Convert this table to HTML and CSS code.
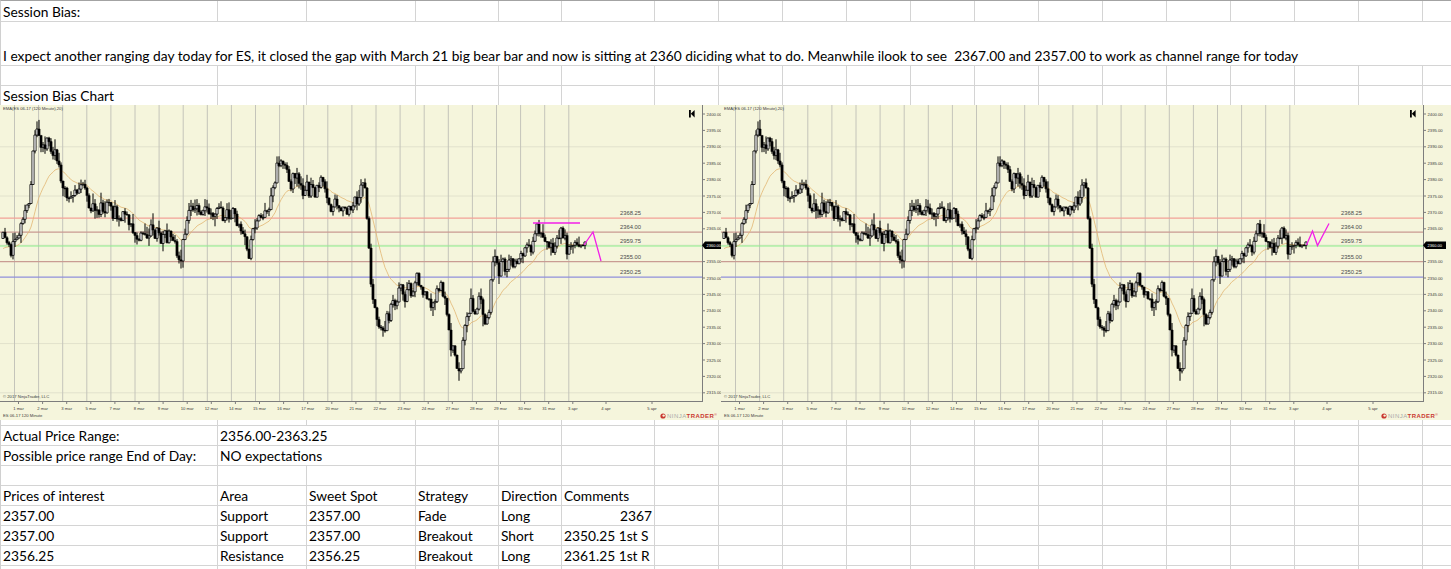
FILE: index.html
```html
<!DOCTYPE html>
<html lang="en">
<head>
<meta charset="utf-8">
<title>Session Bias</title>
<link rel="stylesheet" href="styles.css">
</head>
<body>
<div class="sheet">
  <div class="row h21">
    <div class="cell col-a">Session Bias:</div><div class="cell col-b"></div><div class="cell col-c"></div><div class="cell col-d"></div><div class="cell col-e"></div><div class="cell col-f"></div><div class="rest"></div>
  </div>
  <div class="row h44">
    <div class="cell full">I expect another ranging day today for ES, it closed the gap with March 21 big bear bar and now is sitting at 2360 diciding what to do. Meanwhile ilook to see  2367.00 and 2357.00 to work as channel range for today</div>
  </div>
  <div class="row">
    <div class="cell col-a"></div><div class="cell col-b"></div><div class="cell col-c"></div><div class="cell col-d"></div><div class="cell col-e"></div><div class="cell col-f"></div><div class="rest"></div>
  </div>
  <div class="row">
    <div class="cell col-a">Session Bias Chart</div><div class="cell col-b"></div><div class="cell col-c"></div><div class="cell col-d"></div><div class="cell col-e"></div><div class="cell col-f"></div><div class="rest"></div>
  </div>
  <div class="row h320">
    <div class="cell col-a"></div><div class="cell col-b"></div><div class="cell col-c"></div><div class="cell col-d"></div><div class="cell col-e"></div><div class="cell col-f"></div><div class="rest"></div>
  </div>
  <div class="row">
    <div class="cell col-a">Actual Price Range:</div><div class="cell col-b no-line">2356.00-2363.25</div><div class="cell col-c"></div><div class="cell col-d"></div><div class="cell col-e"></div><div class="cell col-f"></div><div class="rest"></div>
  </div>
  <div class="row">
    <div class="cell col-a">Possible price range End of Day:</div><div class="cell col-b no-line">NO expectations</div><div class="cell col-c"></div><div class="cell col-d"></div><div class="cell col-e"></div><div class="cell col-f"></div><div class="rest"></div>
  </div>
  <div class="row">
    <div class="cell col-a"></div><div class="cell col-b"></div><div class="cell col-c"></div><div class="cell col-d"></div><div class="cell col-e"></div><div class="cell col-f"></div><div class="rest"></div>
  </div>
  <div class="row">
    <div class="cell col-a">Prices of interest</div><div class="cell col-b">Area</div><div class="cell col-c">Sweet Spot</div><div class="cell col-d">Strategy</div><div class="cell col-e">Direction</div><div class="cell col-f">Comments</div><div class="rest"></div>
  </div>
  <div class="row">
    <div class="cell col-a">2357.00</div><div class="cell col-b">Support</div><div class="cell col-c">2357.00</div><div class="cell col-d">Fade</div><div class="cell col-e">Long</div><div class="cell col-f align-right">2367</div><div class="rest"></div>
  </div>
  <div class="row">
    <div class="cell col-a">2357.00</div><div class="cell col-b">Support</div><div class="cell col-c">2357.00</div><div class="cell col-d">Breakout</div><div class="cell col-e">Short</div><div class="cell col-f">2350.25 1st S</div><div class="rest"></div>
  </div>
  <div class="row">
    <div class="cell col-a">2356.25</div><div class="cell col-b">Resistance</div><div class="cell col-c">2356.25</div><div class="cell col-d">Breakout</div><div class="cell col-e">Long</div><div class="cell col-f">2361.25 1st R</div><div class="rest"></div>
  </div>
  <div class="row">
    <div class="cell col-a"></div><div class="cell col-b"></div><div class="cell col-c"></div><div class="cell col-d"></div><div class="cell col-e"></div><div class="cell col-f"></div><div class="rest"></div>
  </div>

  <div class="charts">
    <svg class="chart chart-left" id="chartLeft" width="721" height="315" viewBox="0 0 721 315"></svg>
    <svg class="chart chart-right" id="chartRight" width="730" height="315" viewBox="0 0 730 315"></svg>
  </div>
</div>
<script src="script.js"></script>
</body>
</html>
```
FILE: styles.css
```css
html, body {
  margin: 0;
  padding: 0;
  overflow: hidden;
  background: #ffffff;
}
body {
  width: 1451px;
  height: 569px;
  font-family: Lato, "Liberation Sans", sans-serif;
  font-size: 13.78px;
  color: #000000;
}
.sheet {
  position: relative;
  width: 1500px;
  border-top: 1px solid #a3a3a3;
  border-left: 1px solid #d0d0d0;
}
.row {
  display: flex;
  box-sizing: border-box;
  height: 20px;
  border-bottom: 1px solid #d4d4d4;
}
.h21 { height: 21px; }
.h44 { height: 44px; }
.h320 { height: 320px; }
.cell {
  box-sizing: border-box;
  flex: none;
  height: 100%;
  display: flex;
  align-items: flex-end;
  padding: 0 2px 1px 2px;
  border-right: 1px solid #d4d4d4;
  white-space: nowrap;
  line-height: 17px;
}
.col-a { width: 217px; }
.col-b { width: 89px; }
.col-c { width: 109px; }
.col-d { width: 83px; }
.col-e { width: 63px; }
.col-f { width: 93px; }
.no-line { border-right-color: transparent; }
.align-right { justify-content: flex-end; }
.full {
  width: 100%;
  border-right: none;
  white-space: pre;
}
.rest {
  flex: 1;
  height: 100%;
  background: repeating-linear-gradient(to right, transparent 0 63px, #d4d4d4 63px 64px);
}

/* embedded chart pictures */
.charts {
  position: absolute;
  top: 104px;
  left: -1px;
  display: flex;
}
.chart { display: block; flex: none; }
.bg { fill: #f5f5dc; }
.hgrid { stroke: #e2e2cc; stroke-width: 1; }
.vgrid { stroke: #c4c4ba; stroke-width: 1; }
.axis { stroke: #7d7d7d; stroke-width: 1; }
.lvl { stroke-width: 1.2; }
.lvl-1 { stroke: #f2a197; }
.lvl-2 { stroke: #c99a92; }
.lvl-3 { stroke: #8cf08c; }
.lvl-4 { stroke: #c99c93; }
.lvl-5 { stroke: #8f8fdb; }
.wick { fill: none; stroke: #000000; stroke-width: 1; }
.body-up { fill: #ffffff; stroke: #000000; stroke-width: 0.8; }
.body-dn { fill: #000000; stroke: #000000; stroke-width: 0.5; }
.ema { fill: none; stroke: #e2b672; stroke-width: 0.8; }
.draw { fill: none; stroke: #f21ee8; stroke-width: 1.3; stroke-linejoin: miter; }
.t-tiny { font-family: "Liberation Sans", Arial, sans-serif; font-size: 4.2px; fill: #3a3a3a; }
.t-lvl { font-family: "Liberation Sans", Arial, sans-serif; font-size: 5.8px; fill: #4a4a4a; }
.tag { fill: #000000; }
.t-tag { font-family: "Liberation Sans", Arial, sans-serif; font-size: 4px; fill: #ffffff; }
.icon-end { fill: #000000; }
.t-logo { font-family: "Liberation Sans", Arial, sans-serif; font-size: 6px; letter-spacing: 0.45px; }
.logo-ninja { fill: #a9a9a9; }
.logo-trader { fill: #c9372f; font-weight: bold; }
.logo-reg { fill: #c9372f; font-size: 3.5px; }
.logo-mark { fill: #c9372f; }
.logo-mark-in { fill: #f5f5dc; }
```
FILE: script.js
```js
(function () {
  var TOP = 105;
  var KP = [[0,240],[4,238],[8,246],[11,256],[14,244],[18,236],[21,228],[24,218],[27,210],[30,195],[32,165],[34,135],[36,125],[38,138],[41,142],[44,146],[47,144],[50,148],[53,150],[56,158],[59,170],[62,182],[65,192],[68,200],[71,196],[74,190],[77,198],[80,192],[83,185],[86,195],[89,208],[92,212],[95,205],[98,212],[101,208],[104,214],[107,200],[110,210],[113,214],[116,212],[119,218],[122,214],[125,210],[128,220],[131,226],[134,236],[137,242],[140,236],[143,228],[146,238],[149,232],[152,224],[155,234],[158,228],[161,240],[164,232],[167,238],[170,230],[173,240],[176,246],[179,258],[181,262],[184,238],[187,218],[190,208],[193,212],[196,200],[199,206],[202,214],[205,206],[208,212],[211,218],[214,210],[217,214],[220,208],[223,215],[226,212],[229,218],[232,212],[235,216],[238,222],[241,228],[244,236],[247,248],[249,255],[252,238],[255,228],[258,222],[261,218],[264,212],[267,208],[270,202],[273,190],[276,172],[279,160],[282,158],[285,168],[288,176],[291,184],[294,172],[297,178],[300,186],[303,190],[306,184],[309,194],[312,188],[315,196],[318,186],[321,180],[324,184],[327,198],[330,206],[333,210],[336,200],[339,212],[342,206],[345,214],[348,210],[351,216],[354,205],[357,198],[360,192],[363,188],[366,196],[368,230],[370,270],[372,300],[375,312],[378,318],[381,326],[384,330],[387,320],[390,312],[393,298],[396,306],[399,292],[402,288],[405,298],[408,286],[411,294],[414,290],[417,268],[420,288],[423,300],[426,292],[429,296],[432,304],[435,298],[438,290],[441,282],[444,296],[447,318],[450,340],[453,352],[456,360],[459,372],[461,368],[463,340],[466,318],[469,308],[472,302],[475,312],[478,300],[481,306],[484,316],[487,324],[489,310],[491,275],[493,256],[496,262],[499,270],[502,258],[505,266],[508,262],[511,256],[514,270],[517,262],[520,252],[523,256],[526,246],[529,252],[532,248],[535,238],[537,228],[540,230],[543,236],[546,244],[549,250],[552,244],[555,250],[558,240],[561,230],[564,238],[567,248],[570,244],[573,250],[576,242],[579,246],[582,240],[585,247]];

  function interp(x) {
    for (var i = 1; i < KP.length; i++) {
      if (x <= KP[i][0]) {
        var a = KP[i - 1], b = KP[i];
        var t = (x - a[0]) / (b[0] - a[0]);
        return a[1] + (b[1] - a[1]) * t;
      }
    }
    return KP[KP.length - 1][1];
  }

  function mulberry(seed) {
    return function () {
      seed |= 0; seed = seed + 0x6D2B79F5 | 0;
      var t = Math.imul(seed ^ seed >>> 15, 1 | seed);
      t = t + Math.imul(t ^ t >>> 7, 61 | t) ^ t;
      return ((t ^ t >>> 14) >>> 0) / 4294967296;
    };
  }

  function f(n) { return (Math.round(n * 10) / 10).toString(); }
  function py(p) { return 9 + (2400 - p) * 3.28; }

  var rand = mulberry(20170403);
  var bars = [];
  var prev = interp(3) - TOP;
  for (var x = 3; x <= 585; x += 2) {
    var c = interp(x) - TOP + (rand() - 0.5) * 13;
    var o = prev;
    var hi = Math.min(o, c) - rand() * rand() * 12;
    var lo = Math.max(o, c) + rand() * rand() * 12;
    bars.push([x, o, c, hi, lo]);
    prev = c;
  }

  var wickD = '', upD = '', dnD = '';
  var ema = [], e = bars[0][2] + 18, k = 2 / 21;
  bars.forEach(function (b) {
    var bx = b[0], bo = b[1], bc = b[2];
    wickD += 'M' + f(bx) + ' ' + f(b[3]) + 'V' + f(b[4]);
    var top = Math.min(bo, bc), h = Math.max(Math.abs(bo - bc), 0.8);
    var seg = 'M' + f(bx - 1.1) + ' ' + f(top) + 'h2.2v' + f(h) + 'h-2.2z';
    if (bc > bo) { dnD += seg; } else { upD += seg; }
    e += k * (bc - e);
    ema.push(f(bx) + ',' + f(e));
  });

  var LEVELS = [[2368.25, '2368.25'], [2364, '2364.00'], [2359.75, '2959.75'], [2355, '2355.00'], [2350.25, '2350.25']];
  var DATES = ['1 mar','2 mar','3 mar','5 mar','7 mar','8 mar','9 mar','10 mar','12 mar','14 mar','15 mar','16 mar','17 mar','20 mar','21 mar','22 mar','23 mar','24 mar','27 mar','28 mar','29 mar','30 mar','31 mar','3 apr'];

  function build(w, drawings) {
    var s = [];
    s.push('<rect class="bg" x="0" y="0" width="' + w + '" height="315"/>');
    [2390, 2375, 2360, 2345, 2330, 2315].forEach(function (p) {
      var y = f(py(p));
      s.push('<line class="hgrid" x1="0" x2="702" y1="' + y + '" y2="' + y + '"/>');
    });
    for (var i = 0; i < 24; i++) {
      var gx = f(14.5 + 24.1 * i);
      s.push('<line class="vgrid" x1="' + gx + '" x2="' + gx + '" y1="0" y2="296"/>');
    }
    LEVELS.forEach(function (l, i) {
      var y = py(l[0]);
      s.push('<line class="lvl lvl-' + (i + 1) + '" x1="0" x2="702" y1="' + f(y) + '" y2="' + f(y) + '"/>');
      s.push('<text class="t-lvl" x="620" y="' + f(y - 3) + '">' + l[1] + '</text>');
    });
    s.push('<polyline class="ema" points="' + ema.join(' ') + '"/>');
    s.push('<path class="wick" d="' + wickD + '"/>');
    s.push('<path class="body-up" d="' + upD + '"/>');
    s.push('<path class="body-dn" d="' + dnD + '"/>');
    drawings.forEach(function (pts) {
      s.push('<polyline class="draw" points="' + pts + '"/>');
    });
    s.push('<line class="axis" x1="702.5" x2="702.5" y1="0" y2="296.5"/>');
    s.push('<line class="axis" x1="0" x2="703" y1="296.5" y2="296.5"/>');
    for (var p = 2400; p >= 2315; p -= 5) {
      var y = py(p);
      s.push('<line class="axis" x1="702" x2="705" y1="' + f(y) + '" y2="' + f(y) + '"/>');
      if (p !== 2360) {
        s.push('<text class="t-tiny" x="706.5" y="' + f(y + 1.5) + '">' + p + '.00</text>');
      }
    }
    var ty = py(2360);
    var tr = w > 725 ? 725 : 721;
    s.push('<path class="tag" d="M702 ' + f(ty) + ' L705 ' + f(ty - 3.8) + ' H' + tr + ' V' + f(ty + 3.8) + ' H705 Z"/>');
    s.push('<text class="t-tag" x="706.5" y="' + f(ty + 1.4) + '">2360.00</text>');
    DATES.forEach(function (d, i) {
      var dx = 18.5 + 24.1 * i;
      s.push('<line class="axis" x1="' + f(dx) + '" x2="' + f(dx) + '" y1="296" y2="299"/>');
      s.push('<text class="t-tiny" text-anchor="middle" x="' + f(dx) + '" y="304.5">' + d + '</text>');
    });
    [[606, '4 apr'], [652, '5 apr']].forEach(function (d) {
      s.push('<line class="axis" x1="' + d[0] + '" x2="' + d[0] + '" y1="296" y2="299"/>');
      s.push('<text class="t-tiny" text-anchor="middle" x="' + d[0] + '" y="304.5">' + d[1] + '</text>');
    });
    s.push('<g class="icon-end"><rect x="689" y="5" width="1.8" height="7.5"/><path d="M690.8 8.75 L694.6 5 V12.5 Z"/></g>');
    s.push('<text class="t-tiny" x="3" y="4.6">EMA(ES 06-17 (120 Minute),20)</text>');
    s.push('<text class="t-tiny" x="3" y="292.5">\u00a9 2017 NinjaTrader, LLC</text>');
    s.push('<text class="t-tiny" x="3" y="311.5">ES 06-17 120 Minute</text>');
    s.push('<circle class="logo-mark" cx="663" cy="311" r="2.6"/><circle class="logo-mark-in" cx="663.6" cy="310.6" r="1.2"/>');
    s.push('<text class="t-logo" x="667" y="313.2"><tspan class="logo-ninja">NINJA</tspan><tspan class="logo-trader">TRADER</tspan><tspan class="logo-reg" dy="-2">\u00ae</tspan></text>');
    return s.join('');
  }

  document.getElementById('chartLeft').innerHTML = build(721, [
    '533,118 580,118',
    '584,140 593,127 601,156'
  ]);
  document.getElementById('chartRight').innerHTML = build(730, [
    '585.5,140 591.5,126 596.5,140.5 608,118.5'
  ]);
})();
```
